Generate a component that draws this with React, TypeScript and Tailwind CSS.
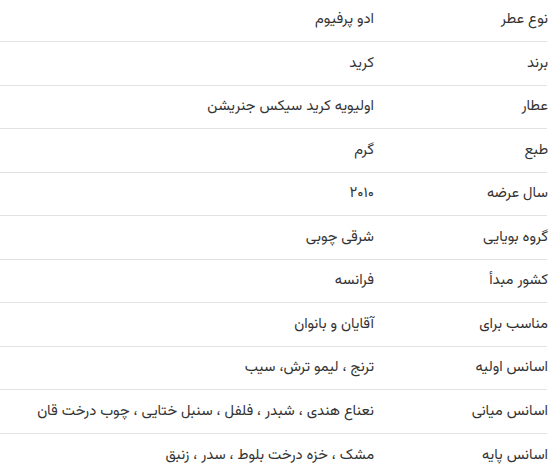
const rows: [string, string][] = [
  ["نوع عطر", "ادو پرفیوم"],
  ["برند", "کرید"],
  ["عطار", "اولیویه کرید سیکس جنریشن"],
  ["طبع", "گرم"],
  ["سال عرضه", "۲۰۱۰"],
  ["گروه بویایی", "شرقی چوبی"],
  ["کشور مبدأ", "فرانسه"],
  ["مناسب برای", "آقایان و بانوان"],
  ["اسانس اولیه", "ترنج ، لیمو ترش، سیب"],
  ["اسانس میانی", "نعناع هندی ، شبدر ، فلفل ، سنبل ختایی ، چوب درخت قان"],
  ["اسانس پایه", "مشک ، خزه درخت بلوط ، سدر ، زنبق"],
];

const App = () => {
  return (
    <div
      dir="rtl"
      className="w-[553px] h-[476px] overflow-hidden bg-white text-[14.75px] text-[#333]"
      style={{ fontFamily: '"Vazirmatn", "Noto Sans Arabic", "DejaVu Sans", sans-serif' }}
    >
      <div className="w-[547px] mr-[6px] -mt-[1.2px]">
        {rows.map(([label, value], i) => (
          <div
            key={label}
            className={`flex items-center h-[43.5px] ${i < rows.length - 1 ? "border-b border-[#e2e2e2]" : ""}`}
          >
            <div className="w-[174px] shrink-0 -mr-[1px]">{label}</div>
            <div className="flex-1">{value}</div>
          </div>
        ))}
      </div>
    </div>
  );
};

export default App;
